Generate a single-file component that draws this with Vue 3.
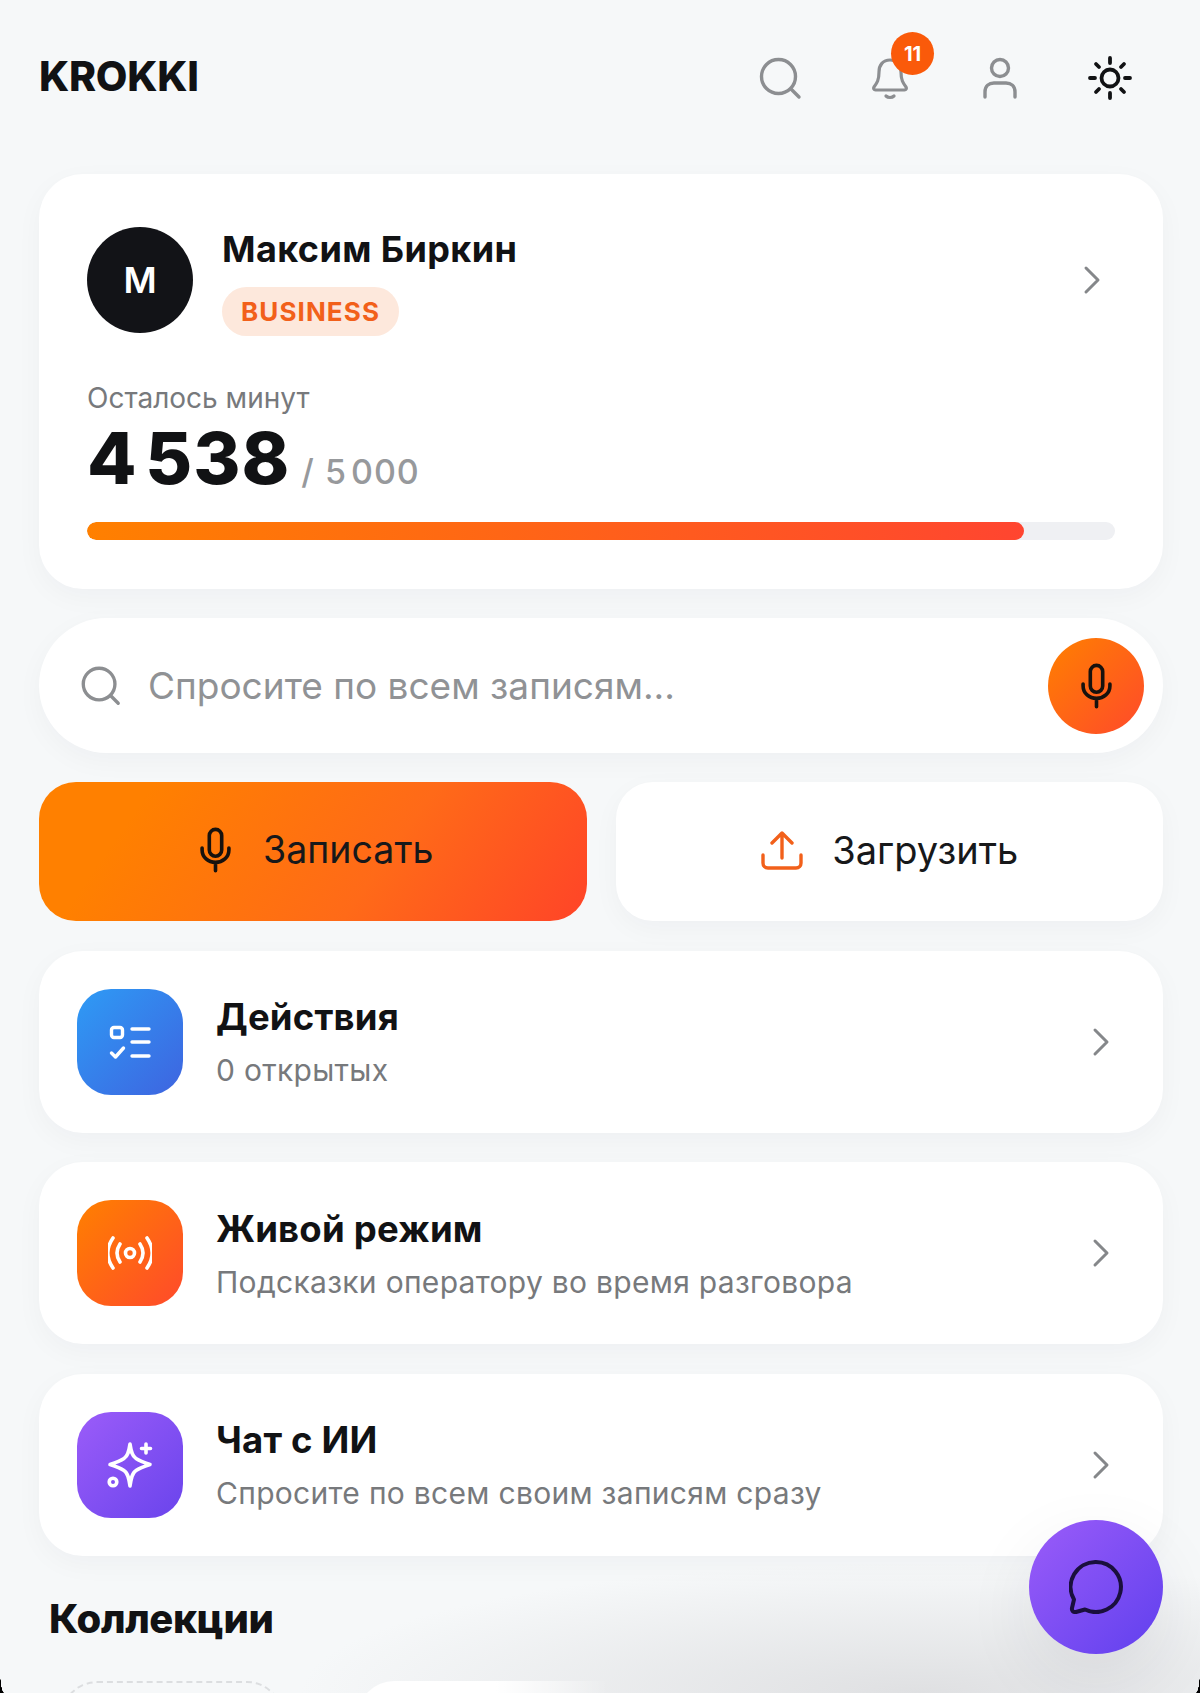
<script setup>
const rows = [
  { title: 'Действия', sub: '0 открытых', cls: 'blue', icon: 'list' },
  { title: 'Живой режим', sub: 'Подсказки оператору во время разговора', cls: 'orange', icon: 'live' },
  { title: 'Чат с ИИ', sub: 'Спросите по всем своим записям сразу', cls: 'purple', icon: 'spark' }
]
</script>

<template>
  <div class="page">
    <header class="top">
      <div class="logo">KROKKI</div>
      <div class="top-icons">
        <svg class="ti" viewBox="0 0 44 44" fill="none" stroke="#8c8e91" stroke-width="3.4" stroke-linecap="round"><circle cx="20.5" cy="20.5" r="17"/><path d="M33 33l8 8"/></svg>
        <div class="bell">
          <svg class="ti" viewBox="0 0 44 44" fill="none" stroke="#8c8e91" stroke-width="3.2" stroke-linecap="round" stroke-linejoin="round"><path d="M22 4c-7 0-11 5-11 12 0 8-2 11-5 15-1 1.500 0 3 1.500 3h29c1.500 0 2.500-1.500 1.500-3-3-4-5-7-5-15 0-7-4-12-11-12z"/><path d="M18 40c2 2 6 2 8 0"/></svg>
          <span class="badge">11</span>
        </div>
        <svg class="ti" viewBox="0 0 44 44" fill="none" stroke="#8c8e91" stroke-width="3.4" stroke-linecap="round"><circle cx="22" cy="12" r="8.500"/><path d="M7 41v-5c0-6 4-9 9-9h12c5 0 9 3 9 9v5"/></svg>
        <svg class="ti" viewBox="0 0 44 44" fill="none" stroke="#111214" stroke-width="3.800" stroke-linecap="round"><circle cx="22" cy="22" r="8.500"/><path d="M22 2v5M22 37v5M2 22h5M37 22h5M8 8l3 3M33 33l3 3M8 36l3-3M33 11l3-3"/></svg>
      </div>
    </header>

    <section class="card profile">
      <div class="who">
        <div class="avatar">М</div>
        <div class="who-text">
          <div class="name">Максим Биркин</div>
          <span class="plan">BUSINESS</span>
        </div>
        <svg class="chev pchev" viewBox="0 0 20 30" fill="none" stroke="#85878a" stroke-width="3" stroke-linecap="round" stroke-linejoin="round"><path d="M4 3l12 12L4 27"/></svg>
      </div>
      <div class="left-label">Осталось минут</div>
      <div class="minutes"><b>4 538</b><span>/ 5&#8202;000</span></div>
      <div class="track"><div class="fill" :style="{ width: '91.1%' }"></div></div>
    </section>

    <section class="card search">
      <svg class="s-ic" viewBox="0 0 44 44" fill="none" stroke="#8c8e91" stroke-width="3.600" stroke-linecap="round"><circle cx="20.500" cy="20.500" r="17"/><path d="M33 33l8 8"/></svg>
      <span class="ph">Спросите по всем записям...</span>
      <div class="mic-btn">
        <svg class="mic" viewBox="0 0 32 44" fill="none" stroke="#17120e" stroke-width="3.500" stroke-linecap="round"><rect x="10" y="2" width="12" height="26" rx="6"/><path d="M3 20v2c0 7 6 12 13 12s13-5 13-12v-2M16 34v8"/></svg>
      </div>
    </section>

    <div class="actions">
      <button class="act rec">
        <svg class="mic" viewBox="0 0 32 44" fill="none" stroke="#17120e" stroke-width="3.500" stroke-linecap="round"><rect x="10" y="2" width="12" height="26" rx="6"/><path d="M3 20v2c0 7 6 12 13 12s13-5 13-12v-2M16 34v8"/></svg>
        <span>Записать</span>
      </button>
      <button class="act up">
        <svg class="upl" viewBox="0 0 44 44" fill="none" stroke="#f2601a" stroke-width="3.400" stroke-linecap="round" stroke-linejoin="round"><path d="M22 30V6M12 15L22 5l10 10M3 27v8c0 3 2 5 5 5h28c3 0 5-2 5-5v-8"/></svg>
        <span>Загрузить</span>
      </button>
    </div>

    <section v-for="r in rows" :key="r.title" class="card row">
      <div class="tile" :class="r.cls">
        <svg v-if="r.icon === 'list'" viewBox="0 0 44 44" fill="none" stroke="#fff" stroke-width="3.400" stroke-linecap="round" stroke-linejoin="round"><rect x="3.500" y="7.500" width="11" height="10" rx="2.500"/><path d="M24 9h17M24 22h17M24 36h17M3.500 33l4 4 8-9"/></svg>
        <svg v-else-if="r.icon === 'live'" viewBox="0 0 44 44" fill="none" stroke="#fff" stroke-width="3.600" stroke-linecap="round"><circle cx="22" cy="22" r="4.500"/><path d="M12 13c-4 6-4 12 0 18M32 13c4 6 4 12 0 18M5 7c-7 10-7 20 0 30M39 7c7 10 7 20 0 30"/></svg>
        <svg v-else class="spark" viewBox="0 0 52 52" fill="none" stroke="#fff" stroke-width="3.600" stroke-linecap="round" stroke-linejoin="round"><path d="M26 5C27 12 28 17 32 19.500C35 21.500 40 23.500 46 25.500C40 27.500 35 29.500 32 31.500C28 34 27 40 26 47C25 40 24 34 20 31.500C17 29.500 12 27.500 6 25.500C12 23.500 17 21.500 20 19.500C24 17 25 12 26 5Z"/><path d="M42 5v9M37.500 9.500h9"/><circle cx="9" cy="43" r="3.800"/></svg>
      </div>
      <div class="row-text">
        <div class="row-title">{{ r.title }}</div>
        <div class="row-sub">{{ r.sub }}</div>
      </div>
      <svg class="chev" viewBox="0 0 20 30" fill="none" stroke="#85878a" stroke-width="3" stroke-linecap="round" stroke-linejoin="round"><path d="M4 3l12 12L4 27"/></svg>
    </section>

    <h2 class="coll">Коллекции</h2>
    <div class="coll-row">
      <div class="c-new"></div>
      <div class="c-item"></div>
    </div>

    <button class="fab">
      <svg viewBox="0 0 54 54" fill="none" stroke="#1a0f3d" stroke-width="4" stroke-linejoin="round"><path d="M27 2a25 25 0 1 1-11 47.500l-9 2.500c-3 .5-4.500-1.500-4-4l2-8.500A25 25 0 0 1 27 2z"/></svg>
    </button>
    <i class="corner cl"></i>
    <i class="corner cr"></i>
  </div>
</template>

<style>
html, body { margin: 0; background: #f6f8f9; }
</style>

<style scoped>
.page {
  position: relative;
  isolation: isolate;
  width: 1200px;
  height: 1693px;
  overflow: hidden;
  padding: 0 37px 0 39px;
  box-sizing: border-box;
  background: #f6f8f9;
  font-family: Inter, "Noto Sans", sans-serif;
  color: #111214;
}
.page::before {
  content: "";
  position: absolute;
  z-index: -1;
  left: 0;
  right: 0;
  bottom: 0;
  height: 170px;
  background: radial-gradient(ellipse 620px 130px at 920px 100%, #dfe0e2, rgba(223,224,226,0));
}
.top { height: 174px; display: flex; align-items: flex-start; justify-content: space-between; }
.logo { margin-top: 51px; font-size: 41px; line-height: 50px; font-weight: 800; letter-spacing: -.3px; }
.top-icons { display: flex; gap: 66px; margin: 56px 31px 0 0; }
.ti { width: 44px; height: 44px; display: block; }
.bell { position: relative; }
.badge {
  position: absolute; left: 23px; top: -24px;
  width: 43px; height: 43px; border-radius: 50%;
  background: #fa5a0a; color: #fff; font-size: 20px; font-weight: 700;
  display: flex; align-items: center; justify-content: center;
}
.card { background: #fff; box-shadow: 0 8px 28px rgba(20,30,50,.035); }
.profile { height: 415px; border-radius: 44px; padding: 53px 48px 0; box-sizing: border-box; }
.who { display: flex; align-items: flex-start; }
.avatar {
  width: 106px; height: 106px; border-radius: 50%; background: #121317; color: #fff;
  font-size: 36px; font-weight: 600; display: flex; align-items: center; justify-content: center; flex: none;
}
.who-text { margin-left: 29px; flex: 1; }
.name { font-size: 36px; line-height: 44px; font-weight: 700; letter-spacing: .4px; }
.plan {
  display: inline-block; margin-top: 16px; padding: 0 19px; height: 49px; line-height: 49px;
  border-radius: 25px; background: #fde8dc; color: #f2601a; font-size: 26px; font-weight: 700; letter-spacing: 1.1px;
}
.pchev { margin: 38px 13px 0 0; }
.left-label { margin-top: 44px; font-size: 28px; line-height: 36px; color: #77797c; }
.minutes { display: flex; align-items: baseline; margin-top: 4px; line-height: 76px; }
.minutes b { font-size: 72px; font-weight: 800; letter-spacing: 1px; word-spacing: -9px; }
.minutes span { font-size: 34px; margin-left: 11px; color: #97999c; font-weight: 500; letter-spacing: 1px; }
.track { margin-top: 12px; height: 18px; border-radius: 9px; background: #eff0f3; overflow: hidden; }
.fill { height: 100%; border-radius: 9px; background: linear-gradient(90deg, #ff8000, #ff4530); }
.search {
  margin-top: 29px; height: 135px; border-radius: 68px; display: flex; align-items: center;
  padding: 0 19px 0 41px; box-sizing: border-box;
}
.s-ic { width: 41px; height: 41px; flex: none; }
.ph { margin-left: 27px; flex: 1; font-size: 37px; color: #909295; }
.mic-btn {
  width: 96px; height: 96px; border-radius: 50%; display: flex; align-items: center; justify-content: center;
  background: linear-gradient(135deg, #ff8000, #ff4a2b);
}
.mic { width: 33px; height: 46px; flex: none; }
.actions { display: grid; grid-template-columns: 1fr 1fr; gap: 29px; margin-top: 29px; }
.act {
  height: 139px; border: 0; border-radius: 37px; display: flex; align-items: center; justify-content: center;
  gap: 28px; padding: 0 0 4px; font: 400 38px Inter, "Noto Sans", sans-serif; color: #17181a;
}
.rec { gap: 31px; padding-left: 7px; font-size: 37.5px; background: linear-gradient(125deg, #ff8000 18%, #ff6a18 62%, #ff4428 100%); }
.up { background: #fff; box-shadow: 0 8px 28px rgba(20,30,50,.035); }
.upl { width: 44px; height: 44px; }
.row {
  margin-top: 29.5px; height: 182px; border-radius: 44px; display: flex; align-items: center;
  padding: 0 52px 0 38px; box-sizing: border-box;
}
.tile {
  width: 106px; height: 106px; border-radius: 34px; display: flex; align-items: center; justify-content: center; flex: none;
}
.tile svg { width: 44px; height: 44px; }
.tile svg.spark { width: 52px; height: 52px; }
.blue { background: linear-gradient(135deg, #2e9bf5, #3e64e0); }
.orange { background: linear-gradient(135deg, #ff8000, #ff4a2b); }
.purple { background: linear-gradient(135deg, #9b5cf9, #6a44ec); }
.row-text { margin-left: 33px; flex: 1; }
.row-title { font-size: 36.5px; line-height: 46px; font-weight: 700; letter-spacing: .2px; }
.row-sub { margin-top: 11px; font-size: 30px; line-height: 38px; color: #77797c; letter-spacing: .3px; }
.chev { width: 20px; height: 30px; flex: none; }
.coll { margin: 38px 0 0 10px; font-size: 40px; line-height: 50px; font-weight: 800; letter-spacing: -.4px; }
.coll-row { display: flex; gap: 75px; margin-top: 37px; padding-left: 22px; }
.c-new { width: 222px; height: 180px; border: 2px dashed #dcdee0; border-radius: 36px; box-sizing: border-box; flex: none; }
.c-item { width: 250px; height: 180px; background: linear-gradient(90deg, #fff 55%, rgba(255,255,255,0)); border-radius: 36px 0 0 0; }
.fab {
  position: absolute; left: 1029px; top: 1520px; width: 134px; height: 134px; border: 0; border-radius: 50%;
  padding: 0; display: flex; align-items: center; justify-content: center;
  background: linear-gradient(135deg, #9b5cf9, #6040ee);
  box-shadow: 0 24px 70px rgba(40,40,60,.08);
}
.fab svg { width: 54px; height: 54px; }
.corner { position: absolute; bottom: 0; width: 4px; height: 24px; }
.cl { left: 0; background: radial-gradient(ellipse 4px 24px at 100% 0, rgba(0,0,0,0) 96%, #000 100%); }
.cr { right: 0; background: radial-gradient(ellipse 4px 24px at 0 0, rgba(0,0,0,0) 96%, #000 100%); }
</style>
